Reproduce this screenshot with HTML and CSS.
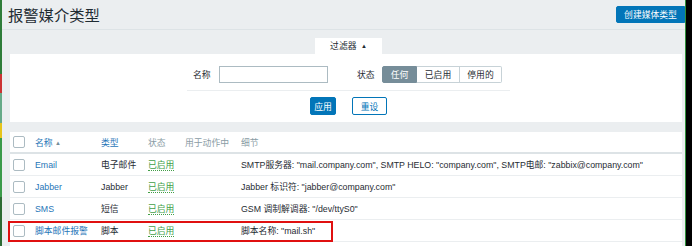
FILE: index.html
```html
<!DOCTYPE html>
<html lang="zh">
<head>
<meta charset="utf-8">
<title>报警媒介类型</title>
<link rel="stylesheet" href="styles.css">
</head>
<body>
<div class="page">
  <div class="edge-left"></div>
  <div class="main">
    <header class="header">
      <h1 class="title">报警媒介类型</h1>
      <button class="btn btn-primary btn-create">创建媒体类型</button>
    </header>

    <div class="filter-tabs">
      <div class="filter-tab">过滤器 <span class="tri">▲</span></div>
    </div>
    <section class="filter">
      <div class="filter-row">
        <label class="lbl lbl-name">名称</label>
        <input class="input" type="text">
        <label class="lbl lbl-status">状态</label>
        <div class="seg">
          <span class="seg-item seg-on seg-1">任何</span>
          <span class="seg-item seg-2">已启用</span>
          <span class="seg-item seg-3">停用的</span>
        </div>
      </div>
      <div class="filter-sep"></div>
      <div class="filter-actions">
        <button class="btn btn-primary btn-apply">应用</button>
        <button class="btn btn-outline btn-reset">重设</button>
      </div>
    </section>

    <section class="table">
      <div class="tr th">
        <span class="cell"><span class="cb"></span></span>
        <span class="cell link">名称 <span class="sort">▲</span></span>
        <span class="cell link">类型</span>
        <span class="cell muted">状态</span>
        <span class="cell muted">用于动作中</span>
        <span class="cell muted">细节</span>
      </div>
      <div class="tr">
        <span class="cell"><span class="cb"></span></span>
        <span class="cell link">Email</span>
        <span class="cell">电子邮件</span>
        <span class="cell"><span class="ok">已启用</span></span>
        <span class="cell"></span>
        <span class="cell">SMTP服务器: "mail.company.com", SMTP HELO: "company.com", SMTP电邮: "zabbix@company.com"</span>
      </div>
      <div class="tr">
        <span class="cell"><span class="cb"></span></span>
        <span class="cell link">Jabber</span>
        <span class="cell">Jabber</span>
        <span class="cell"><span class="ok">已启用</span></span>
        <span class="cell"></span>
        <span class="cell">Jabber 标识符: "jabber@company.com"</span>
      </div>
      <div class="tr">
        <span class="cell"><span class="cb"></span></span>
        <span class="cell link">SMS</span>
        <span class="cell">短信</span>
        <span class="cell"><span class="ok">已启用</span></span>
        <span class="cell"></span>
        <span class="cell">GSM 调制解调器: "/dev/ttyS0"</span>
      </div>
      <div class="tr tr-marked">
        <span class="cell"><span class="cb"></span></span>
        <span class="cell link">脚本邮件报警</span>
        <span class="cell">脚本</span>
        <span class="cell"><span class="ok">已启用</span></span>
        <span class="cell"></span>
        <span class="cell">脚本名称: "mail.sh"</span>
        <span class="mark"></span>
      </div>
      <div class="tr tr-foot"></div>
    </section>
  </div>
  <div class="edge-right"></div>
</div>
</body>
</html>
```

FILE: styles.css
```css
* { box-sizing: border-box; }
html, body { margin: 0; padding: 0; }
body {
  background: #ebeef0;
  font-family: "Liberation Sans", Arial, "Noto Sans CJK SC", sans-serif;
  font-size: 8.8px;
  color: #1f2c33;
  overflow: hidden;
}
.page {
  display: flex;
  width: 692px;
  height: 246px;
  overflow: hidden;
}
.edge-left {
  width: 2px;
  flex: none;
  background: linear-gradient(#2f7d3a 0 30%, #c33 30% 38%, #6a8 38% 50%, #e6c41a 50% 56%, #3a9a4a 56% 80%, #2d6b34 80%);
}
.edge-right {
  width: 7px;
  flex: none;
  background: #000;
  border-left: 1px solid #2f8f3a;
}
.main {
  flex: 1;
  min-width: 0;
  display: flex;
  flex-direction: column;
  overflow: hidden;
}
.main > * { flex-shrink: 0; }

/* header */
.header {
  display: flex;
  justify-content: space-between;
  align-items: flex-start;
  height: 30px;
  border-bottom: 1px solid #dde3e6;
  padding: 0 0 0 6px;
}
.title {
  margin: 7px 0 0;
  font-size: 15.3px;
  line-height: 18px;
  font-weight: normal;
  color: #1f2c33;
}
.btn {
  font-family: inherit;
  font-size: 8.8px;
  border-radius: 2px;
  padding: 0;
  cursor: pointer;
}
.btn-primary {
  background: #0275b8;
  border: 1px solid #0275b8;
  color: #fff;
}
.btn-outline {
  background: #fff;
  border: 1px solid #0275b8;
  color: #0275b8;
}
.btn-create {
  margin-top: 6px;
  height: 17px;
  width: 69px;
  border-radius: 2px 0 0 2px;
}

/* filter */
.filter-tabs {
  display: flex;
  padding: 8px 0 0 313px;
}
.filter-tab {
  width: 67px;
  height: 16px;
  background: #fff;
  line-height: 16px;
  text-align: center;
}
.tri { font-size: 6px; vertical-align: 1px; margin-left: 2px; color: #1f2c33; }
.filter {
  background: #fff;
  margin: 0 3px 0 8px;
  height: 68px;
  padding-top: 12px;
}
.filter-row {
  display: flex;
  align-items: center;
  height: 17px;
  padding-left: 183px;
}
.lbl-name { width: 26px; }
.input {
  width: 109px;
  height: 17px;
  border: 1px solid #acbbc2;
  border-radius: 0;
  padding: 0;
  margin: 0;
  background: #fff;
}
.lbl-status { margin-left: 29px; width: 25px; }
.seg { display: flex; height: 17px; }
.seg-item {
  display: flex;
  align-items: center;
  justify-content: center;
  border: 1px solid #c7d2d7;
  border-left: none;
  background: #fff;
  color: #1f2c33;
}
.seg-1 { width: 35px; border-left: 1px solid #768d99; border-radius: 2px 0 0 2px; }
.seg-2 { width: 43px; }
.seg-3 { width: 42px; border-radius: 0 2px 2px 0; }
.seg-on { background: #768d99; border-color: #768d99; color: #fff; }
.filter-sep {
  margin: 7px 0 0 177px;
  width: 323px;
  height: 1px;
  background: #ebeef0;
}
.filter-actions {
  display: flex;
  gap: 16px;
  padding: 6px 0 0 300px;
}
.btn-apply { width: 26px; height: 18px; }
.btn-reset { width: 35px; height: 18px; }

/* table */
.table {
  margin: 10px 3px 0 8px;
  background: #fff;
  flex: 1 0 auto;
}
.tr {
  position: relative;
  display: grid;
  grid-template-columns: 25px 66px 47px 37px 56px 1fr;
  align-items: center;
  height: 22px;
  border-bottom: 1px solid #ebeef0;
}
.th {
  height: 22px;
  border-bottom: 2px solid #dde3e6;
}
.cell { white-space: nowrap; }
.cell:first-child { padding-left: 3px; display: flex; align-items: center; }
.cb {
  display: block;
  width: 12px;
  height: 12px;
  border: 1px solid #acbbc2;
  border-radius: 2px;
  background: #fff;
}
.link { color: #1f76b8; }
.muted { color: #8a9ca5; }
.sort { font-size: 6px; color: #768d99; vertical-align: 1px; }
.ok {
  color: #429e47;
  border-bottom: 1px dotted #429e47;
}
.tr-foot { border-bottom: none; }
.mark {
  position: absolute;
  left: -2px;
  top: 1px;
  width: 325px;
  height: 21px;
  border: 2px solid #e01010;
  pointer-events: none;
}
```
